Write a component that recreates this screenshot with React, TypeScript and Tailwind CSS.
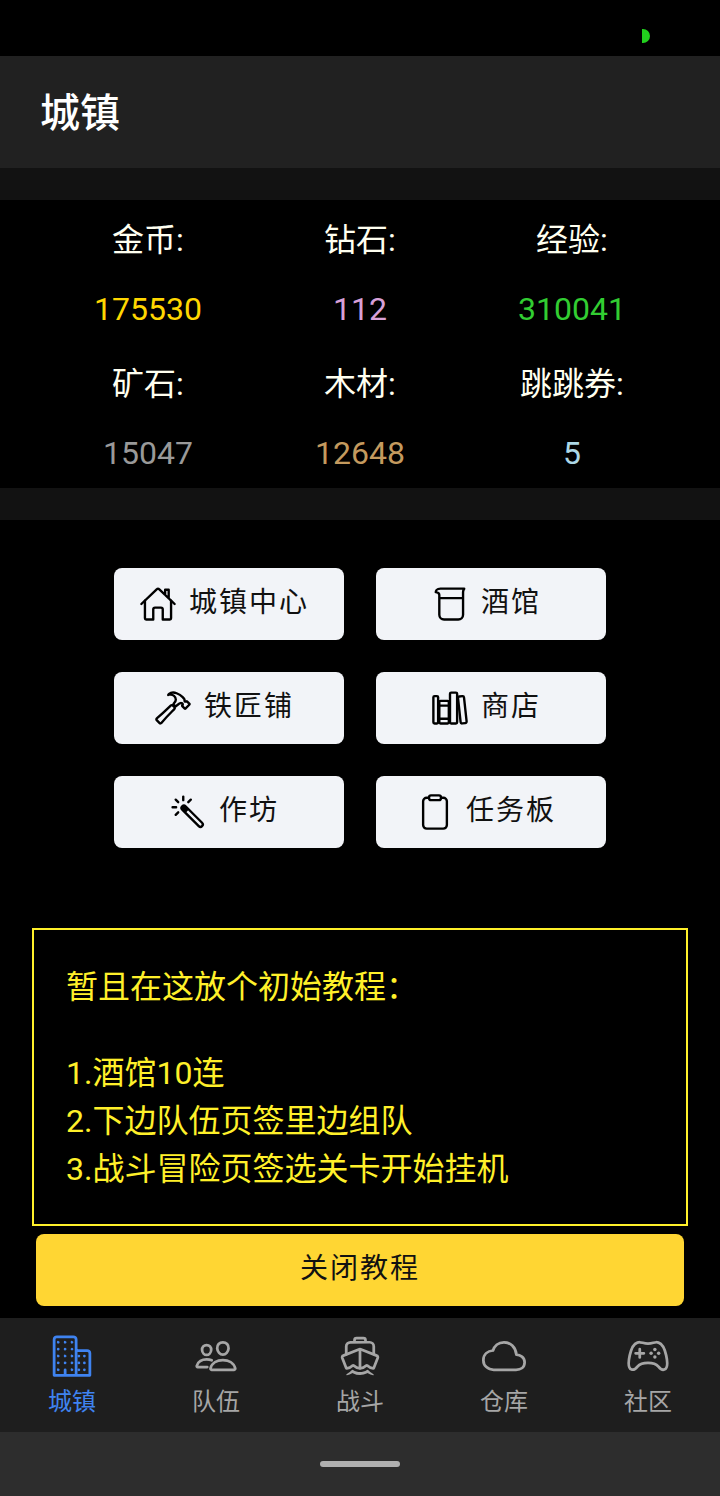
import type { IconType } from 'react-icons';
import {
  IoBeakerOutline,
  IoBoatOutline,
  IoBusinessOutline,
  IoClipboardOutline,
  IoCloudOutline,
  IoColorWandOutline,
  IoGameControllerOutline,
  IoHammerOutline,
  IoHomeOutline,
  IoLibraryOutline,
  IoPeopleOutline,
} from 'react-icons/io5';

const stats = [
  { label: '金币:', value: '175530', color: 'text-[#ffd700]' },
  { label: '钻石:', value: '112', color: 'text-[#d8a0d8]' },
  { label: '经验:', value: '310041', color: 'text-[#32cd32]' },
  { label: '矿石:', value: '15047', color: 'text-[#999999]' },
  { label: '木材:', value: '12648', color: 'text-[#c49a5e]' },
  { label: '跳跳券:', value: '5', color: 'text-[#add8e6]' },
];

const buttons: { label: string; Icon: IconType }[] = [
  { label: '城镇中心', Icon: IoHomeOutline },
  { label: '酒馆', Icon: IoBeakerOutline },
  { label: '铁匠铺', Icon: IoHammerOutline },
  { label: '商店', Icon: IoLibraryOutline },
  { label: '作坊', Icon: IoColorWandOutline },
  { label: '任务板', Icon: IoClipboardOutline },
];

const tabs: { label: string; Icon: IconType }[] = [
  { label: '城镇', Icon: IoBusinessOutline },
  { label: '队伍', Icon: IoPeopleOutline },
  { label: '战斗', Icon: IoBoatOutline },
  { label: '仓库', Icon: IoCloudOutline },
  { label: '社区', Icon: IoGameControllerOutline },
];

const App = () => {
  return (
    <div className="flex flex-col w-[720px] h-[1496px] overflow-hidden bg-black font-['Roboto','Noto_Sans_CJK_SC',sans-serif]">
      {/* status bar */}
      <div className="flex shrink-0 justify-end items-center h-[56px] pt-[16px] pr-[70px]">
        <div className="w-[8px] h-[14px] bg-[#22d01e] rounded-r-full" />
      </div>

      <div className="flex shrink-0 items-center h-[112px] pt-[4px] px-[40px] bg-[#212121]">
        <h1 className="text-[40px] leading-[56px] font-medium text-white">城镇</h1>
      </div>

      <div className="shrink-0 h-[32px] bg-[#121212]" />

      <div className="grid shrink-0 grid-cols-3 h-[288px] px-[42px]">
        {stats.map((s) => (
          <div key={s.label} className="flex flex-col items-center h-[144px] pt-[16px]">
            <span className="text-[32px] leading-[48px] text-[#fffff0]">{s.label}</span>
            <span className={`mt-[26px] text-[32px] leading-[38px] ${s.color}`}>{s.value}</span>
          </div>
        ))}
      </div>

      <div className="shrink-0 h-[32px] bg-[#121212]" />

      <div className="grid shrink-0 grid-cols-[230px_230px] justify-center gap-x-[32px] gap-y-[32px] pt-[48px]">
        {buttons.map(({ label, Icon }) => (
          <div key={label} className="flex justify-center items-center gap-[12px] h-[72px] pr-[10px] rounded-[8px] bg-[#f2f4f8]">
            <Icon className="shrink-0 text-[38px] text-black" />
            <span className="text-[28px] leading-[40px] tracking-[2px] text-[#111111] -mt-[2px]">{label}</span>
          </div>
        ))}
      </div>

      <div className="shrink-0 h-[298px] mt-[80px] mx-[32px] pt-[33px] pl-[32px] pr-[33px] border-2 border-[#fff02a]">
        <p className="text-[32px] leading-[48px] text-[#fff02a]">暂且在这放个初始教程：</p>
        <p className="mt-[38px] text-[32px] leading-[48px] text-[#fff02a]">1.酒馆10连</p>
        <p className="text-[32px] leading-[48px] text-[#fff02a]">2.下边队伍页签里边组队</p>
        <p className="text-[32px] leading-[48px] text-[#fff02a]">3.战斗冒险页签选关卡开始挂机</p>
      </div>

      <div className="flex shrink-0 justify-center items-center h-[72px] mt-[8px] mx-[36px] rounded-[8px] bg-[#ffd633]">
        <span className="text-[28px] leading-[40px] tracking-[2px] text-[#111111] -mt-[2px]">关闭教程</span>
      </div>

      <div className="flex shrink-0 h-[114px] mt-[12px] bg-[#1e1e1e]">
        {tabs.map(({ label, Icon }, i) => (
          <div key={label} className={`flex flex-1 flex-col items-center pt-[16px] ${i === 0 ? 'text-[#3f83f0]' : 'text-[#a6a6a6]'}`}>
            <Icon className="text-[44px]" />
            <span className="mt-[7px] text-[24px] leading-[34px]">{label}</span>
          </div>
        ))}
      </div>

      {/* android nav bar */}
      <div className="flex flex-1 justify-center items-center bg-[#2d2d2d]">
        <div className="w-[80px] h-[6px] rounded-full bg-[#b0b0b0]" />
      </div>
    </div>
  );
};

export default App;
